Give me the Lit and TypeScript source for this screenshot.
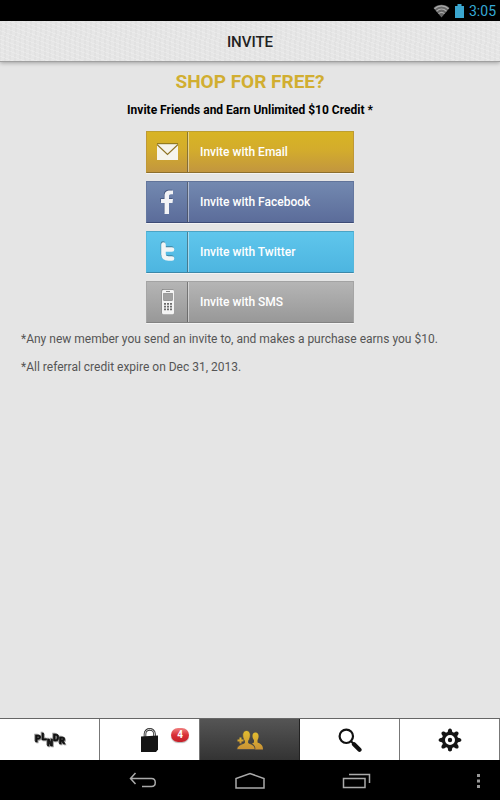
import { LitElement, html, css, svg } from "lit";
import { customElement, property } from "lit/decorators.js";

const buttonIcons: Record<string, unknown> = {
  email: svg`
    <rect x="2" y="5" width="21" height="16" fill="#f6f4ec"/>
    <path d="M2 5.5 12.5 15.5 23 5.5" fill="none" stroke="#8f7424" stroke-width="1.2"/>
    <path d="M2 4.7H23" stroke="#86701f" stroke-width="1"/>`,
  facebook: svg`
    <path d="M9.500 25V14H6V10H9.500V7C9.500 3 11.500 1.500 15 1.500H18V5.300H16C14.600 5.300 14 6 14 7V10H18L17.500 14H14V25Z" fill="#3f4f78" transform="translate(-.6 -.7)"/>
    <path d="M9.500 25V14H6V10H9.500V7C9.500 3 11.500 1.500 15 1.500H18V5.300H16C14.600 5.300 14 6 14 7V10H18L17.500 14H14V25Z" fill="#f2f3f6"/>`,
  twitter: svg`
    <path d="M8.500 5.500V15C8.500 18.500 10.500 19.500 13.500 19.500H17M8.500 10.500H17" fill="none" stroke="#3a7f9c" stroke-width="4.600" stroke-linecap="round" stroke-linejoin="round" transform="translate(-.5 -.9)"/>
    <path d="M8.500 5.500V15C8.500 18.500 10.500 19.500 13.500 19.500H17M8.500 10.500H17" fill="none" stroke="#f1f5f6" stroke-width="4.600" stroke-linecap="round" stroke-linejoin="round"/>`,
  sms: svg`
    <rect x="6.6" y="0" width="12" height="25" rx="1.5" fill="#7b7b7b"/>
    <rect x="7" y=".7" width="12" height="24.6" rx="1.5" fill="#f4f4f4"/>
    <path d="M11 2.5H15" stroke="#888" stroke-width="1"/>
    <rect x="8.7" y="4.6" width="8.6" height="7" fill="#a2a2a2" stroke="#777" stroke-width=".6"/>
    <path d="M9 14.8H17M9 17.6H17M9 20.4H17" stroke="#6c6c6c" stroke-width="1.7" stroke-dasharray="2 1"/>`,
};

@customElement("invite-button")
class InviteButton extends LitElement {
  @property() kind = "email";
  @property() label = "";

  static styles = css`
    :host { display: block; }
    .btn {
      display: flex;
      align-items: stretch;
      width: 100%;
      height: 42px;
      padding: 0;
      border: 1px solid;
      font: 500 12px Roboto, "Liberation Sans", sans-serif;
      color: #fff;
      text-align: left;
      box-shadow: 0 1px 0 #f3f3f3;
      cursor: pointer;
    }
    .icon {
      display: grid;
      place-items: center;
      width: 40px;
      border-right: 1px solid rgba(60, 60, 60, 0.5);
      box-shadow: 1px 0 0 rgba(255, 255, 255, 0.45);
    }
    .text { padding-left: 12px; align-self: center; }
    .email { background: linear-gradient(#d8b424, #d3ac2c 45%, #c2963f); border-color: #bd9f30 #bf9836 #8d6f2e; }
    .facebook { background: linear-gradient(#7389b0, #5b6c9a); border-color: #61749a #64779f #3d4b75; }
    .twitter { background: linear-gradient(#5fc6ec, #4db5e0); border-color: #4ba4c5 #54b7dc #3c88a9; }
    .sms { background: linear-gradient(#b5b5b5, #989898); border-color: #a3a3a3 #a5a5a5 #828282; }
  `;

  render() {
    return html`<button class="btn ${this.kind}" type="button">
      <span class="icon"><svg width="25" height="26" viewBox="0 0 25 26" aria-hidden="true">${buttonIcons[this.kind]}</svg></span>
      <span class="text">${this.label}</span>
    </button>`;
  }
}

const teeth = [0, 45, 90, 135, 180, 225, 270, 315];

@customElement("app-root")
class AppRoot extends LitElement {
  static styles = css`
    :host {
      display: flex;
      flex-direction: column;
      min-height: 100vh;
      background: #e5e5e5;
      font-family: Roboto, "Liberation Sans", sans-serif;
    }
    .status {
      display: flex;
      justify-content: flex-end;
      align-items: center;
      gap: 5px;
      height: 21px;
      padding-right: 4px;
      background: #000;
      color: #35a9d6;
      font-size: 14px;
    }
    .header {
      display: grid;
      place-items: center;
      box-sizing: border-box;
      height: 41px;
      padding-top: 2px;
      background:
        repeating-linear-gradient(20deg, rgba(255, 255, 255, 0.2) 0 1px, transparent 1px 4px),
        repeating-linear-gradient(92deg, rgba(0, 0, 0, 0.02) 0 2px, transparent 2px 5px),
        #e6e6e6;
      border-bottom: 1px solid #a0a0a0;
      box-shadow: 0 1px 4px rgba(0, 0, 0, 0.3);
    }
    h1 { margin: 0; font-size: 15px; font-weight: 500; line-height: 20px; color: #222; }
    main { flex: 1; padding: 8px 20px; }
    h2 { margin: 0; text-align: center; font-size: 19px; font-weight: 700; line-height: 24px; color: #d1ae31; }
    .lead { margin: 8px 0 12px; text-align: center; font-size: 12px; font-weight: 700; line-height: 17px; color: #000; }
    .actions { display: grid; gap: 8px; width: 208px; margin: 0 auto; }
    .note { margin: 8px 0 12px; padding-left: 1px; font-size: 12px; line-height: 16px; color: #555; }
    .tabs {
      display: grid;
      grid-template-columns: repeat(5, 1fr);
      box-sizing: border-box;
      height: 42px;
      border-top: 1px solid #666;
      background: #fff;
    }
    .tab {
      position: relative;
      display: grid;
      place-items: center;
      padding: 0;
      border: 0;
      border-right: 1px solid #777;
      background: #fff;
      cursor: pointer;
    }
    .tab.active { background: linear-gradient(#555, #333); border-color: #222; }
    .badge {
      position: absolute;
      top: 9px;
      right: 10px;
      width: 18px;
      border-radius: 7px;
      background: linear-gradient(#f08080, #d92f35 50%, #c41f28);
      box-shadow: 0 1px 1px rgba(0, 0, 0, 0.3);
      color: #fff;
      font: bold 10px/14px Roboto, sans-serif;
      text-align: center;
    }
    .logo {
      font: bold 10px "Liberation Mono", monospace;
      filter: drop-shadow(1px 1px 0 #999) drop-shadow(-1px -1px 0 #999);
    }
    .nav {
      display: grid;
      grid-template-columns: 1fr 107px 107px 107px 1fr;
      height: 40px;
      background: #000;
    }
    .key { display: grid; place-items: center; padding: 2px 0 0; border: 0; background: none; cursor: pointer; }
    .more { justify-content: end; padding-right: 17px; }
  `;

  render() {
    return html`
      <div class="status">
        <svg width="17" height="14" viewBox="0 0 17 14" aria-hidden="true">
          <path d="M.5 4C5-.2 12-.2 16.500 4L8.500 13.500Z" fill="#666"/>
          <path d="M1.500 4.800C5.500 1 11.500 1 15.500 4.800M3.500 7.200C6.500 4.500 10.500 4.500 13.500 7.200M5.500 9.600C7.300 8 9.700 8 11.500 9.600" fill="none" stroke="#aaa" stroke-width="1.200"/>
        </svg>
        <svg width="9" height="14" viewBox="0 0 9 14" aria-hidden="true"><path d="M0 2H2.500V0H6.500V2H9V14H0Z" fill="#3ba6cf"/></svg>
        <span>3:05</span>
      </div>
      <header class="header"><h1>INVITE</h1></header>
      <main>
        <h2>SHOP FOR FREE?</h2>
        <p class="lead">Invite Friends and Earn Unlimited $10 Credit *</p>
        <div class="actions">
          <invite-button kind="email" label="Invite with Email"></invite-button>
          <invite-button kind="facebook" label="Invite with Facebook"></invite-button>
          <invite-button kind="twitter" label="Invite with Twitter"></invite-button>
          <invite-button kind="sms" label="Invite with SMS"></invite-button>
        </div>
        <p class="note">*Any new member you send an invite to, and makes a purchase earns you $10.</p>
        <p class="note">*All referral credit expire on Dec 31, 2013.</p>
      </main>
      <nav class="tabs">
        <button class="tab" type="button">
          <svg class="logo" width="32" height="20" viewBox="0 0 32 20" role="img" aria-label="PLNDR">
            <text x="1" y="12" dy="0 -2 6 -5 3" fill="#111" stroke="#111" stroke-width=".7">PLNDR</text>
          </svg>
        </button>
        <button class="tab" type="button" aria-label="Bag">
          <svg width="20" height="26" viewBox="0 0 20 26" aria-hidden="true">
            <path d="M5 10V7C5 .8 14.500 .8 14.500 7V10" fill="none" stroke="#333" stroke-width="2.600"/>
            <path d="M5 10V7C5 .8 14.500 .8 14.500 7V10" fill="none" stroke="#ccc" stroke-width="1"/>
            <path d="M1 9.500 18 8.500V22.500L16 25H1Z" fill="#151515"/>
          </svg>
          <span class="badge">4</span>
        </button>
        <button class="tab active" type="button" aria-label="Invite">
          <svg width="28" height="20" viewBox="0 0 28 20" aria-hidden="true">
            <defs><linearGradient id="gold" x2="0" y2="1"><stop stop-color="#e2bd2f"/><stop offset="1" stop-color="#c99235"/></linearGradient></defs>
            <g fill="url(#gold)">
              <path d="M18 19.500C20 17 18.500 15 16 13.500L18 12.500V10C16 8 15.500 2.500 19.500 2.500C23.500 2.500 23 8 21.500 10V12.500C25 14 27 15 27 19.500Z"/>
              <path d="M1 19.500C1 16 3.500 15 8.500 13V11C6 7.500 5.500 .5 10.500 .5C15.500 .5 15 7.500 12.500 11V13C17.500 15 19 16 19 19.500Z" stroke="#474747" stroke-width=".8"/>
              <path d="M3.500 7.500H5.500V9.500H7.500V11.500H5.500V13.500H3.500V11.500H1.500V9.500H3.500Z"/>
            </g>
          </svg>
        </button>
        <button class="tab" type="button" aria-label="Search">
          <svg width="24" height="24" viewBox="0 0 24 24" aria-hidden="true">
            <circle cx="8.300" cy="8.300" r="6.700" fill="none" stroke="#111" stroke-width="2.200"/>
            <path d="M12.800 13 16.500 16.700" stroke="#111" stroke-width="2"/>
            <path d="M16 16.200 21.500 21.700" stroke="#111" stroke-width="4.200" stroke-linecap="round"/>
          </svg>
        </button>
        <button class="tab" type="button" aria-label="Settings">
          <svg width="24" height="24" viewBox="-12 -12 24 24" aria-hidden="true">
            ${teeth.map((a) => svg`<path d="M-2.800-6-1.800-10.200Q0-12.700 1.800-10.200L2.800-6Z" fill="#151515" transform="rotate(${a})"/>`)}
            <circle r="6.600" fill="#fff" stroke="#151515" stroke-width="3.200"/>
            <circle r="2.200" fill="#151515"/>
          </svg>
        </button>
      </nav>
      <div class="nav">
        <span></span>
        <button class="key" type="button" aria-label="Back">
          <svg width="28" height="18" viewBox="0 0 28 18" fill="none" stroke="#aaa" stroke-width="1.500" aria-hidden="true"><path d="M6.500 1 1.500 6.500 6.500 12M1.500 6.500H22.500C27.500 6.500 27.500 14.500 22.500 14.500H13"/></svg>
        </button>
        <button class="key" type="button" aria-label="Home">
          <svg width="30" height="18" viewBox="0 0 30 18" fill="none" stroke="#aaa" stroke-width="1.500" aria-hidden="true"><path d="M1 16V6.500L15 1.500 29 6.500V16Z"/></svg>
        </button>
        <button class="key" type="button" aria-label="Recent apps">
          <svg width="30" height="18" viewBox="0 0 30 18" fill="none" stroke="#aaa" stroke-width="1.500" aria-hidden="true"><path d="M1.500 6.500H23V15.500H1.500ZM7 2.500H27.500V11"/></svg>
        </button>
        <button class="key more" type="button" aria-label="More options">
          <svg width="9" height="16" viewBox="0 0 9 16" fill="#999" aria-hidden="true"><path d="M3 1H6V4H3ZM3 6.500H6V9.500H3ZM3 12H6V15H3Z"/></svg>
        </button>
      </div>
    `;
  }
}
